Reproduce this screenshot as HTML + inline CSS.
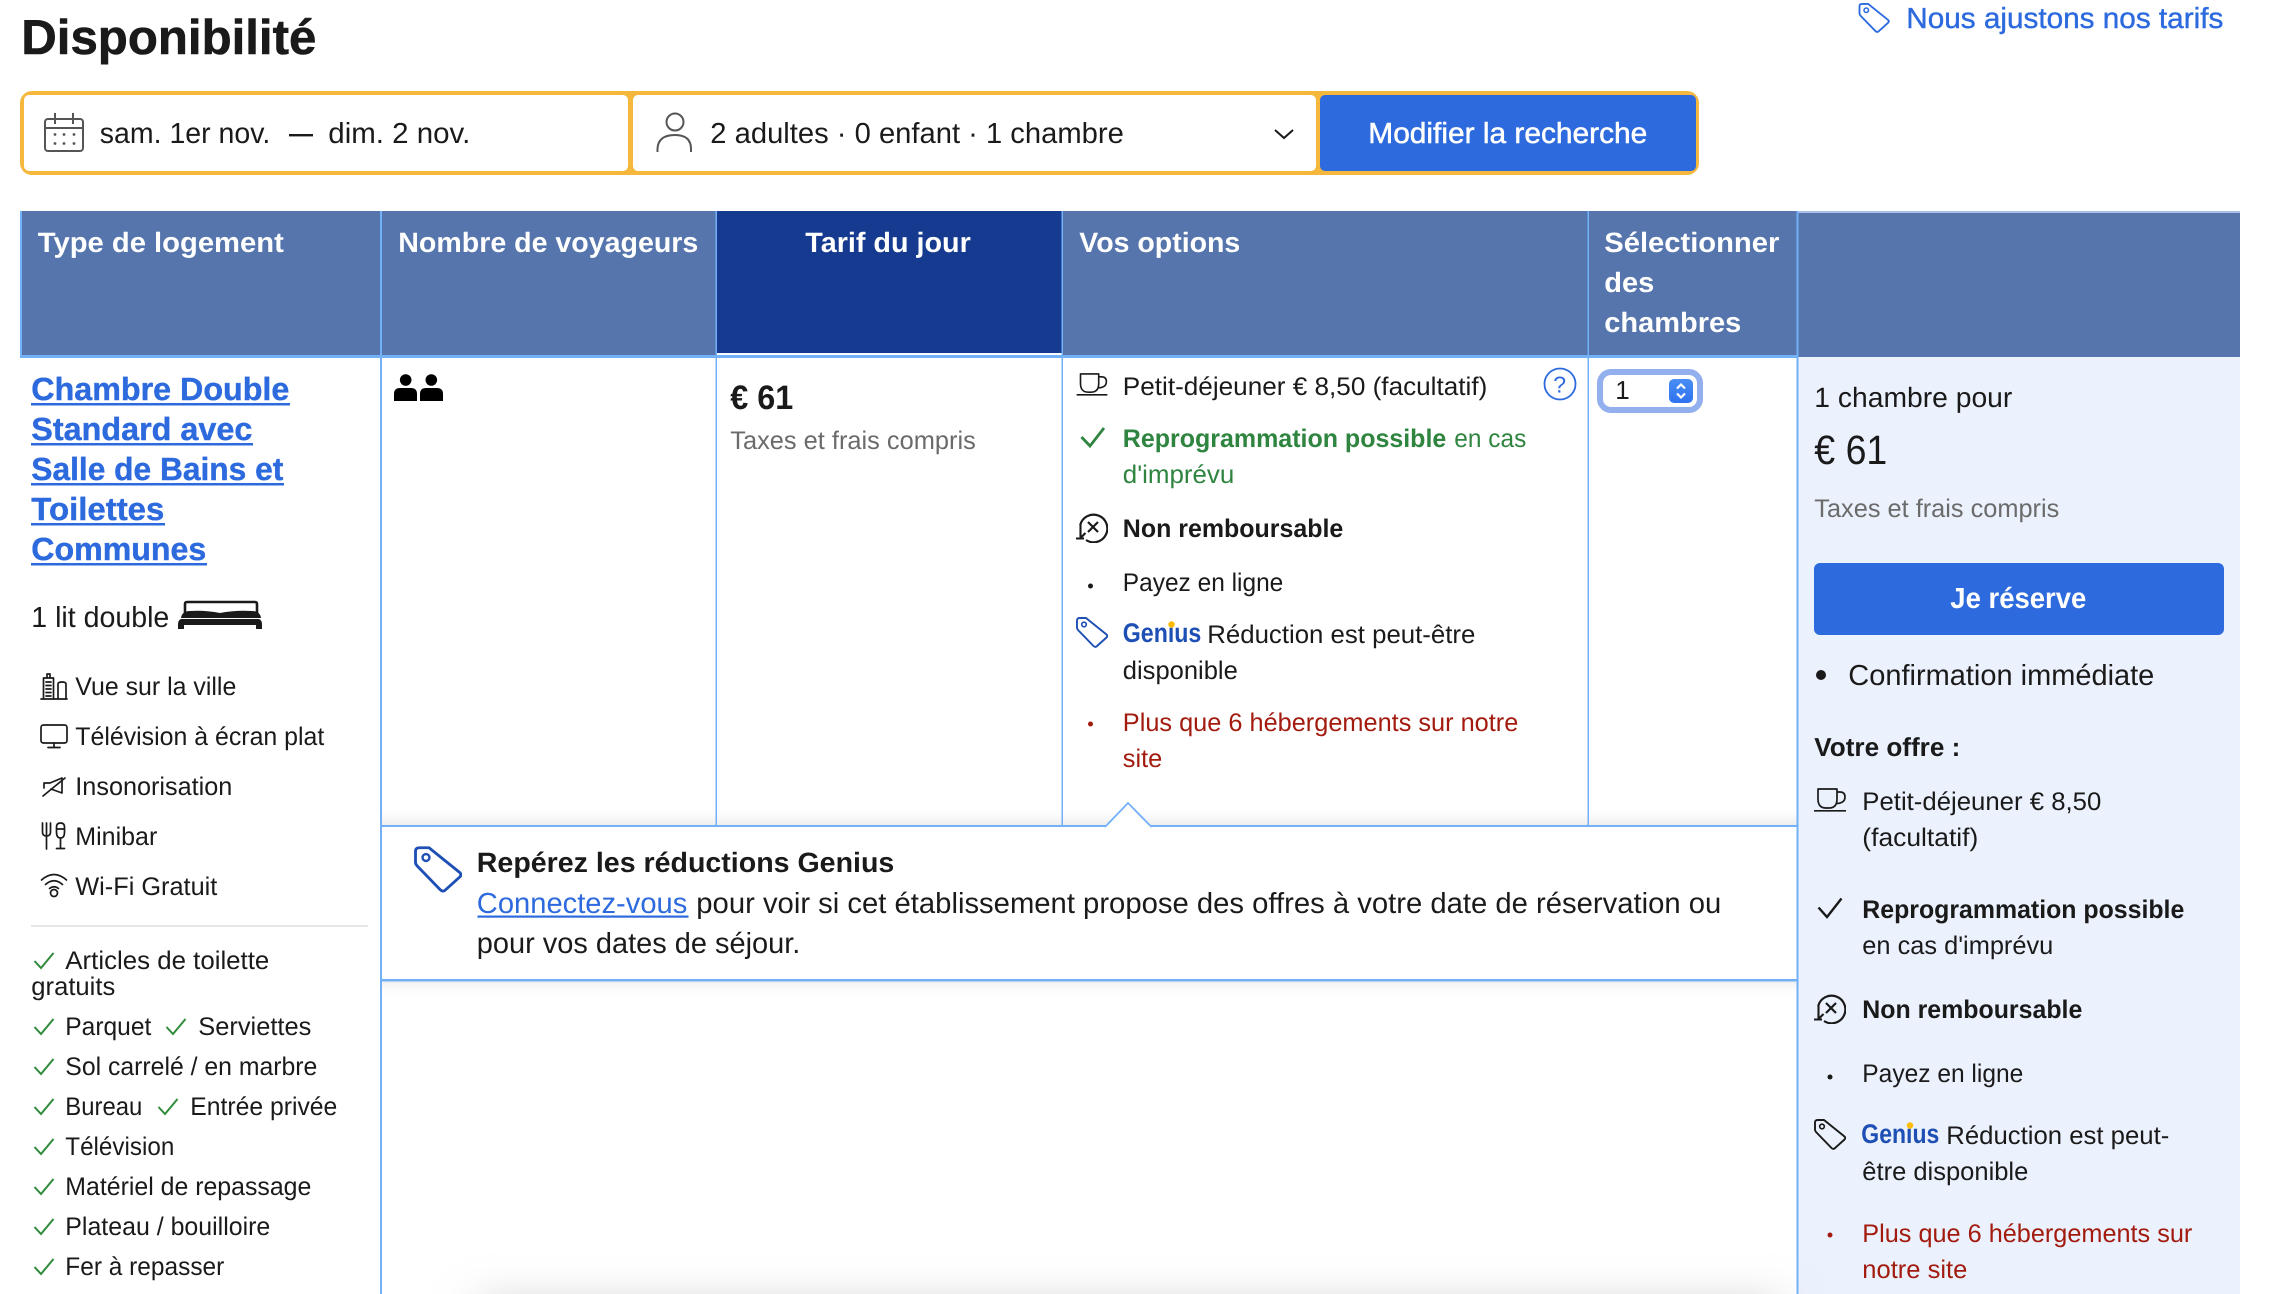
<!DOCTYPE html>
<html lang="fr">
<head>
<meta charset="utf-8">
<title>Disponibilité</title>
<style>
html,body{margin:0;padding:0;background:#fff;width:2282px;height:1294px;overflow:hidden}
svg{display:block}
text{font-family:"Liberation Sans",Arial,sans-serif;font-size:25.5px;fill:#1a1a1a;white-space:pre;text-rendering:geometricPrecision;transform:translateX(-.7px)}
.b{font-weight:700}
.h{font-weight:700;font-size:28px;fill:#fff}
.lg{font-size:29px}
.g{fill:#6b6b6b}
.gr{fill:#2f8540}
.r{fill:#a31b0f}
.gen{font-weight:700;font-size:27px;fill:#1d4fb4}
.ic{fill:none;stroke:#1a1a1a;stroke-width:1.8;stroke-linecap:round;stroke-linejoin:round}
.ck{fill:none;stroke:#2f8a3a;stroke-width:2}
</style>
</head>
<body>
<svg xmlns="http://www.w3.org/2000/svg" width="2282" height="1294" viewBox="0 0 2282 1294">
<defs>
<symbol id="tag" viewBox="0 0 32 31">
<path d="M1 3.5Q1 1 3.5 1H10L30.5 17.5Q32 19 30.5 20.5L20.5 29.5Q19 30.5 17.500 29L2 13Q1 12 1 10.500Z" fill="none" stroke="currentColor" stroke-width="1.9" stroke-linejoin="round"/>
<circle cx="8" cy="7.500" r="2.300" fill="none" stroke="currentColor" stroke-width="1.600"/>
</symbol>
<symbol id="cup" viewBox="0 0 32 24">
<path d="M4 1H23V11Q23 20 15 20H12Q4 20 4 11Z M23 4H26Q31 4 31 9Q31 15 23 15.500 M0 22.800H32" fill="none" stroke="#1a1a1a" stroke-width="1.700" stroke-linejoin="round"/>
</symbol>
<symbol id="refund" viewBox="0 0 32 30">
<path d="M4.200 12A13.800 13.800 0 1 1 10 27" fill="none" stroke="#1a1a1a" stroke-width="2.200"/>
<path d="M4.500 11V25M0 25.500H8M9.500 20L4.500 25" fill="none" stroke="#1a1a1a" stroke-width="2.100"/>
<path d="M12 9L22 19M22 9L12 19" fill="none" stroke="#1a1a1a" stroke-width="2.200"/>
</symbol>
<linearGradient id="up" x1="0" y1="0" x2="0" y2="1"><stop offset="0" stop-color="#fff" stop-opacity="0"/><stop offset="1" stop-color="#e9e9e9" stop-opacity=".8"/></linearGradient>
<linearGradient id="down" x1="0" y1="0" x2="0" y2="1"><stop offset="0" stop-color="#ececec" stop-opacity=".8"/><stop offset="1" stop-color="#fff" stop-opacity="0"/></linearGradient>
<linearGradient id="step" x1="0" y1="0" x2="0" y2="1"><stop offset="0" stop-color="#4a8ef5"/><stop offset="1" stop-color="#2f72ef"/></linearGradient>
<filter id="bl" x="-10%" y="-300%" width="120%" height="700%"><feGaussianBlur stdDeviation="22"/></filter>
</defs>

<!-- Title -->
<text class="b" x="22" y="54" style="font-size:49px;stroke:#1a1a1a;stroke-width:.6" textLength="295" lengthAdjust="spacingAndGlyphs">Disponibilité</text>
<use href="#tag" x="1858" y="3" width="32" height="30" style="color:#2d6ade"/>
<text class="lg" x="1907" y="28" style="fill:#2d6ade;stroke:#2d6ade;stroke-width:.4" textLength="317" lengthAdjust="spacingAndGlyphs">Nous ajustons nos tarifs</text>

<!-- Search bar -->
<rect x="20" y="91" width="1679" height="84" rx="12" fill="#f5b83d"/>
<rect x="24" y="95" width="604" height="76" rx="5" fill="#fff"/>
<rect x="633" y="95" width="683" height="76" rx="5" fill="#fff"/>
<rect x="1320" y="95" width="376" height="76" rx="5" fill="#2d6ade"/>
<g fill="none" stroke="#555" stroke-width="2">
<rect x="45" y="119" width="38" height="32" rx="3"/>
<path d="M45 128H83M55 113V124M73 113V124"/>
</g>
<g fill="#555"><circle cx="55" cy="134.500" r="1.400"/><circle cx="64" cy="134.500" r="1.400"/><circle cx="74" cy="134.500" r="1.400"/><circle cx="55" cy="143.500" r="1.400"/><circle cx="64" cy="143.500" r="1.400"/><circle cx="74" cy="143.500" r="1.400"/></g>
<text class="lg" x="100.500" y="143" textLength="170.500" lengthAdjust="spacingAndGlyphs">sam. 1er nov.</text>
<rect x="289" y="134" width="24" height="2.400" fill="#1a1a1a"/>
<text class="lg" x="329" y="143" textLength="142" lengthAdjust="spacingAndGlyphs">dim. 2 nov.</text>
<g fill="none" stroke="#555" stroke-width="2"><ellipse cx="675" cy="122" rx="8.500" ry="8.500"/><path d="M657.500 152V149Q658 135 675 135Q691 135 691 149V152"/></g>
<text class="lg" x="711" y="143" textLength="413.500" lengthAdjust="spacingAndGlyphs">2 adultes · 0 enfant · 1 chambre</text>
<path d="M1275 130L1284 138L1293 130" fill="none" stroke="#1a1a1a" stroke-width="2"/>
<text class="lg" x="1369" y="143" style="fill:#fff;stroke:#fff;stroke-width:.5" textLength="279" lengthAdjust="spacingAndGlyphs">Modifier la recherche</text>

<!-- Table header -->
<rect x="20" y="211" width="1778" height="146" fill="#5575ac"/>
<rect x="1798" y="211" width="442" height="146" fill="#5575ac"/>
<rect x="1798" y="211" width="442" height="2" fill="#a9c1e9"/>
<rect x="717" y="211" width="345" height="143" fill="#163a8f"/>
<rect x="717" y="353" width="345" height="2" fill="#fff"/>
<text class="h" x="38.500" y="252" textLength="246" lengthAdjust="spacingAndGlyphs">Type de logement</text>
<text class="h" x="399" y="252" textLength="300" lengthAdjust="spacingAndGlyphs">Nombre de voyageurs</text>
<text class="h" x="806" y="252" textLength="165.500" lengthAdjust="spacingAndGlyphs">Tarif du jour</text>
<text class="h" x="1080" y="252" textLength="161" lengthAdjust="spacingAndGlyphs">Vos options</text>
<text class="h" x="1605" y="252" textLength="175" lengthAdjust="spacingAndGlyphs">Sélectionner</text>
<text class="h" x="1605" y="292" textLength="50" lengthAdjust="spacingAndGlyphs">des</text>
<text class="h" x="1605" y="332" textLength="137" lengthAdjust="spacingAndGlyphs">chambres</text>

<!-- Right panel -->
<rect x="1798" y="357" width="442" height="937" fill="#ebf1fd"/>

<!-- Shadows -->
<rect x="382" y="806" width="1415" height="19" fill="url(#up)"/>
<rect x="382" y="981" width="1415" height="18" fill="url(#down)"/>
<rect x="480" y="1305" width="1300" height="30" fill="#c4c4c4" filter="url(#bl)"/>

<!-- Grid lines -->
<g fill="#72b1f8">
<rect x="20" y="211" width="2" height="146"/>
<rect x="20" y="355" width="1778" height="3"/>
<rect x="380" y="211" width="2" height="1083"/>
<rect x="715.500" y="211" width="1.500" height="615"/>
<rect x="1061.500" y="211" width="1.500" height="615"/>
<rect x="1587.500" y="211" width="1.500" height="615"/>
<rect x="1796.500" y="211" width="2" height="1083"/>
<rect x="381" y="825" width="1416" height="2"/>
<rect x="381" y="979" width="1416" height="2.500"/>
</g>
<path d="M1105 827L1128 803L1151.500 827" fill="#fff" stroke="#72b1f8" stroke-width="1.800"/>
<rect x="1106.500" y="826" width="43.500" height="3" fill="#fff"/>

<!-- Room column -->
<g style="fill:#2d6ade">
<text class="b" style="font-size:32px;fill:#2d6ade;stroke:#2d6ade;stroke-width:.4" x="32" y="400" textLength="258" lengthAdjust="spacingAndGlyphs">Chambre Double</text>
<text class="b" style="font-size:32px;fill:#2d6ade;stroke:#2d6ade;stroke-width:.4" x="32" y="440" textLength="221" lengthAdjust="spacingAndGlyphs">Standard avec</text>
<text class="b" style="font-size:32px;fill:#2d6ade;stroke:#2d6ade;stroke-width:.4" x="32" y="480" textLength="252" lengthAdjust="spacingAndGlyphs">Salle de Bains et</text>
<text class="b" style="font-size:32px;fill:#2d6ade;stroke:#2d6ade;stroke-width:.4" x="32" y="520" textLength="133" lengthAdjust="spacingAndGlyphs">Toilettes</text>
<text class="b" style="font-size:32px;fill:#2d6ade;stroke:#2d6ade;stroke-width:.4" x="32" y="560" textLength="175" lengthAdjust="spacingAndGlyphs">Communes</text>
<rect x="31" y="403" width="259" height="2.500"/>
<rect x="31" y="443" width="222" height="2.500"/>
<rect x="31" y="483" width="253" height="2.500"/>
<rect x="31" y="523" width="134" height="2.500"/>
<rect x="31" y="563" width="176" height="2.500"/>
</g>
<text class="lg" x="32" y="627" textLength="138" lengthAdjust="spacingAndGlyphs">1 lit double</text>
<!-- bed -->
<path d="M185 613V604Q185 602 187 602H255Q257 602 257 604V613" fill="none" stroke="#1a1a1a" stroke-width="2.600"/>
<path d="M181 618Q182 611 190 611Q205 610 220 613Q235 610 252 611Q260 611 261 618Z" fill="#1a1a1a"/>
<path d="M178 625Q178 619 182 619H258Q262 619 262 625V629H256V625H184V629H178Z" fill="#1a1a1a"/>

<!-- amenity icons -->
<g class="ic" style="stroke-width:1.700">
<path d="M41 699H67M43.500 699V678H53.500V699M47 678V674H50V678M46 682H51M46 685.500H51M46 689H51M46 692.500H51M46 696H51M58 699V684Q58 682 62 682Q66 682 66 684V699"/>
<rect x="41" y="725" width="26" height="18" rx="2.500"/>
<path d="M54 743V747M48 747.500H60"/>
<path d="M44 788V783L50 783L62 778L62 793L51 789M43 796L65 778"/>
<path d="M42.500 823V832Q42.500 836 46.500 836Q50.500 836 50.500 832V823M46.500 823V849M60.500 823Q56.500 823 56.500 827V832Q56.500 838 60.500 838Q64.500 838 64.500 832V827Q64.500 823 60.500 823ZM56.500 829H64.500M60.500 838V848.500M56.500 848.500H64.500"/>
<path d="M41.500 880Q54 869 66.500 880M45.500 884.500Q54 877 62.500 884.500M49.500 888.500Q54 885 58.500 888.500"/>
<circle cx="54" cy="893" r="3.500"/>
</g>
<text x="76" y="695" textLength="161" lengthAdjust="spacingAndGlyphs">Vue sur la ville</text>
<text x="76" y="745" textLength="249" lengthAdjust="spacingAndGlyphs">Télévision à écran plat</text>
<text x="76" y="795" textLength="157" lengthAdjust="spacingAndGlyphs">Insonorisation</text>
<text x="76" y="845" textLength="82" lengthAdjust="spacingAndGlyphs">Minibar</text>
<text x="76" y="895" textLength="142" lengthAdjust="spacingAndGlyphs">Wi-Fi Gratuit</text>
<rect x="31" y="925" width="337" height="2" fill="#e6e6e6"/>

<!-- facility checks -->
<g class="ck">
<path d="M34.500 961L41 968L53.500 953"/>
<path d="M34.500 1027L41 1034L53.500 1019"/>
<path d="M166.500 1027L173 1034L185.500 1019"/>
<path d="M34.500 1067L41 1074L53.500 1059"/>
<path d="M34.500 1107L41 1114L53.500 1099"/>
<path d="M158.500 1107L165 1114L177.500 1099"/>
<path d="M34.500 1147L41 1154L53.500 1139"/>
<path d="M34.500 1187L41 1194L53.500 1179"/>
<path d="M34.500 1227L41 1234L53.500 1219"/>
<path d="M34.500 1267L41 1274L53.500 1259"/>
</g>
<text x="66" y="969" textLength="204" lengthAdjust="spacingAndGlyphs">Articles de toilette</text>
<text x="32" y="995" textLength="84" lengthAdjust="spacingAndGlyphs">gratuits</text>
<text x="66" y="1035" textLength="86" lengthAdjust="spacingAndGlyphs">Parquet</text>
<text x="199" y="1035" textLength="113" lengthAdjust="spacingAndGlyphs">Serviettes</text>
<text x="66" y="1075" textLength="252" lengthAdjust="spacingAndGlyphs">Sol carrelé / en marbre</text>
<text x="66" y="1115" textLength="77" lengthAdjust="spacingAndGlyphs">Bureau</text>
<text x="191" y="1115" textLength="147" lengthAdjust="spacingAndGlyphs">Entrée privée</text>
<text x="66" y="1155" textLength="109" lengthAdjust="spacingAndGlyphs">Télévision</text>
<text x="66" y="1195" textLength="246" lengthAdjust="spacingAndGlyphs">Matériel de repassage</text>
<text x="66" y="1235" textLength="205" lengthAdjust="spacingAndGlyphs">Plateau / bouilloire</text>
<text x="66" y="1275" textLength="159" lengthAdjust="spacingAndGlyphs">Fer à repasser</text>

<!-- People icon -->
<g fill="#000">
<circle cx="405.700" cy="380" r="5.800"/><circle cx="431.300" cy="380" r="5.800"/>
<path d="M394 401V394Q394 388 400 388H411Q417 388 417 394V401Z"/>
<path d="M420 401V394Q420 388 426 388H437Q443 388 443 394V401Z"/>
</g>

<!-- Price -->
<text class="b" x="731" y="409" style="font-size:34px" textLength="63" lengthAdjust="spacingAndGlyphs">€ 61</text>
<text class="g" x="731" y="449" textLength="245.500" lengthAdjust="spacingAndGlyphs">Taxes et frais compris</text>

<!-- Options -->
<use href="#cup" x="1076" y="373" width="32" height="23"/>
<text x="1123.500" y="395" textLength="364.500" lengthAdjust="spacingAndGlyphs">Petit-déjeuner € 8,50 (facultatif)</text>
<circle cx="1560" cy="384" r="15.500" fill="none" stroke="#2d6ade" stroke-width="1.800"/>
<text x="1554" y="392.500" style="font-size:23px;fill:#2d6ade">?</text>
<path d="M1081.500 437L1090 446L1104 428" fill="none" stroke="#2f8540" stroke-width="2.800"/>
<text class="b gr" x="1123.500" y="447" textLength="323.500" lengthAdjust="spacingAndGlyphs">Reprogrammation possible</text>
<text class="gr" x="1455" y="447" textLength="72" lengthAdjust="spacingAndGlyphs">en cas</text>
<text class="gr" x="1123.500" y="483" textLength="111.500" lengthAdjust="spacingAndGlyphs">d'imprévu</text>
<use href="#refund" x="1076" y="513" width="32" height="30"/>
<text class="b" x="1123.500" y="537" textLength="220.500" lengthAdjust="spacingAndGlyphs">Non remboursable</text>
<circle cx="1090.500" cy="586" r="2.500" fill="#1a1a1a"/>
<text x="1123.500" y="591" textLength="160.500" lengthAdjust="spacingAndGlyphs">Payez en ligne</text>
<use href="#tag" x="1076" y="617" width="32" height="31" style="color:#1d4fb4"/>
<text class="gen" x="1123.500" y="642" textLength="78.500" lengthAdjust="spacingAndGlyphs">Genius</text>
<circle cx="1171.500" cy="624.500" r="3.200" fill="#febb02"/>
<text x="1208" y="643" textLength="268" lengthAdjust="spacingAndGlyphs">Réduction est peut-être</text>
<text x="1123.500" y="679" textLength="115" lengthAdjust="spacingAndGlyphs">disponible</text>
<circle cx="1090.500" cy="724" r="2.500" fill="#a31b0f"/>
<text class="r" x="1123.500" y="731" textLength="395.500" lengthAdjust="spacingAndGlyphs">Plus que 6 hébergements sur notre</text>
<text class="r" x="1123.500" y="767" textLength="39.500" lengthAdjust="spacingAndGlyphs">site</text>

<!-- Select -->
<rect x="1600" y="372" width="100" height="38" rx="11" fill="#fff" stroke="#93b0ee" stroke-width="6"/>
<text x="1616" y="399" style="font-size:26px">1</text>
<rect x="1669" y="379" width="24" height="24" rx="5" fill="url(#step)"/>
<path d="M1677 388.500L1681 384.500L1685 388.500M1677 393.500L1681 397.500L1685 393.500" fill="none" stroke="#fff" stroke-width="2.200"/>

<!-- Genius banner -->
<use href="#tag" x="414" y="846" width="48" height="47" style="color:#1d4fb4"/>
<text class="b" x="477.500" y="872" style="font-size:28px" textLength="417.500" lengthAdjust="spacingAndGlyphs">Repérez les réductions Genius</text>
<text class="lg" x="477.500" y="913" style="fill:#2d6ade" textLength="210.500" lengthAdjust="spacingAndGlyphs">Connectez-vous</text>
<rect x="477.500" y="915.500" width="211" height="2.200" fill="#2d6ade"/>
<text class="lg" x="697" y="913" textLength="1025" lengthAdjust="spacingAndGlyphs">pour voir si cet établissement propose des offres à votre date de réservation ou</text>
<text class="lg" x="477.500" y="953" textLength="323.500" lengthAdjust="spacingAndGlyphs">pour vos dates de séjour.</text>

<!-- Right panel content -->
<text class="lg" x="1815" y="407" style="font-size:28px" textLength="198" lengthAdjust="spacingAndGlyphs">1 chambre pour</text>
<text x="1815" y="464" style="font-size:41px" textLength="73" lengthAdjust="spacingAndGlyphs">€ 61</text>
<text class="g" x="1815" y="517" textLength="245" lengthAdjust="spacingAndGlyphs">Taxes et frais compris</text>
<rect x="1814" y="563" width="410" height="72" rx="6" fill="#2d6ade"/>
<text class="b" x="1951" y="608" style="font-size:29px;fill:#fff" textLength="136" lengthAdjust="spacingAndGlyphs">Je réserve</text>
<circle cx="1821" cy="675" r="5" fill="#1a1a1a"/>
<text class="lg" x="1849" y="685" textLength="306" lengthAdjust="spacingAndGlyphs">Confirmation immédiate</text>
<text class="b" x="1815" y="756" style="font-size:26px" textLength="146" lengthAdjust="spacingAndGlyphs">Votre offre :</text>

<use href="#cup" x="1814" y="788" width="32" height="24"/>
<text x="1863" y="810" textLength="239" lengthAdjust="spacingAndGlyphs">Petit-déjeuner € 8,50</text>
<text x="1863" y="846" textLength="116" lengthAdjust="spacingAndGlyphs">(facultatif)</text>
<path d="M1818.500 907.500L1827 917L1841.500 898.500" fill="none" stroke="#1a1a1a" stroke-width="2.400"/>
<text class="b" x="1863" y="918" textLength="322" lengthAdjust="spacingAndGlyphs">Reprogrammation possible</text>
<text x="1863" y="954" textLength="191" lengthAdjust="spacingAndGlyphs">en cas d'imprévu</text>
<use href="#refund" x="1814" y="994" width="32" height="30"/>
<text class="b" x="1863" y="1018" textLength="220" lengthAdjust="spacingAndGlyphs">Non remboursable</text>
<circle cx="1830" cy="1077" r="2.500" fill="#1a1a1a"/>
<text x="1863" y="1082" textLength="161" lengthAdjust="spacingAndGlyphs">Payez en ligne</text>
<use href="#tag" x="1814" y="1119" width="32" height="31" style="color:#1a1a1a"/>
<text class="gen" x="1862" y="1143" textLength="78" lengthAdjust="spacingAndGlyphs">Genius</text>
<circle cx="1910" cy="1125.500" r="3.200" fill="#febb02"/>
<text x="1947" y="1144" textLength="223" lengthAdjust="spacingAndGlyphs">Réduction est peut-</text>
<text x="1863" y="1180" textLength="166" lengthAdjust="spacingAndGlyphs">être disponible</text>
<circle cx="1830" cy="1235" r="2.500" fill="#a31b0f"/>
<text class="r" x="1863" y="1242" textLength="330" lengthAdjust="spacingAndGlyphs">Plus que 6 hébergements sur</text>
<text class="r" x="1863" y="1278" textLength="105" lengthAdjust="spacingAndGlyphs">notre site</text>
</svg>
</body>
</html>
